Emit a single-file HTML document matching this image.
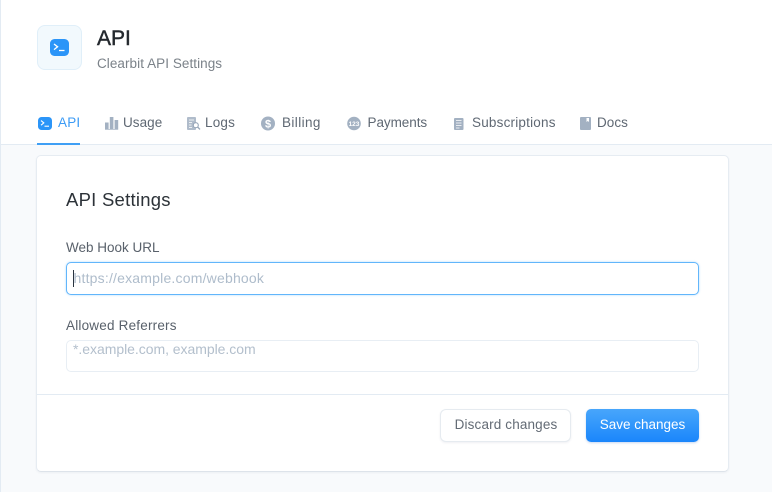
<!DOCTYPE html>
<html>
<head>
<meta charset="utf-8">
<style>
html,body{margin:0;padding:0}
body{width:772px;height:492px;position:relative;overflow:hidden;background:#f8fafc;font-family:"Liberation Sans",sans-serif}
.a{position:absolute;white-space:nowrap}
.tab{position:absolute;top:114px;line-height:18px;font-size:13.5px;letter-spacing:.05px;color:#5f6873;white-space:nowrap}
svg{position:absolute;display:block}
</style>
</head>
<body>
<div class="a" style="left:0;top:0;width:772px;height:144px;background:#fff"></div>
<div class="a" style="left:0;top:144px;width:772px;height:1px;background:#e3ebf3"></div>
<div class="a" style="left:0;top:0;width:1px;height:492px;background:#e3ebf3"></div>

<div class="a" style="left:37px;top:25px;width:43px;height:43px;border:1px solid #e0eff9;border-radius:8px;background:#f2f9fd"></div>
<svg style="left:50px;top:39px" width="19" height="17" viewBox="0 0 19 17"><rect width="19" height="17" rx="4.500" fill="#2b95f8"/><path d="M4 5l3.600 2.800L4 10.600" fill="none" stroke="#fff" stroke-width="1.300"/><path d="M9 11.500h5.500" stroke="#fff" stroke-width="1.300"/></svg>
<div class="a" style="left:97px;top:26px;font-size:21px;line-height:26px;color:#24292e;-webkit-text-stroke:.45px #24292e">API</div>
<div class="a" style="left:97px;top:55px;font-size:13.5px;line-height:17px;letter-spacing:.06px;color:#7b8289">Clearbit API Settings</div>

<svg style="left:38px;top:117px" width="14" height="13" viewBox="0 0 14 13"><rect width="14" height="13" rx="3.500" fill="#2b95f8"/><path d="M3 3.600l2.800 2.300L3 8.200" fill="none" stroke="#fff" stroke-width="1.100"/><path d="M6.500 9.200h4.500" stroke="#fff" stroke-width="1.100"/></svg>
<div class="tab" style="left:58px;color:#3c9bf5;letter-spacing:.2px">API</div>
<div class="a" style="left:37px;top:143px;width:43px;height:2px;background:#3f9ff5"></div>

<svg style="left:105px;top:117px" width="14" height="13" viewBox="0 0 14 13"><g fill="#a3b1c2"><rect x="0" y="5.500" width="3.600" height="6.500"/><rect x="4.800" y="0" width="3.600" height="12"/><rect x="9.600" y="3" width="3.600" height="9"/><rect x="0" y="12.300" width="13.200" height=".7"/></g></svg>
<div class="tab" style="left:123px">Usage</div>

<svg style="left:187px;top:117px" width="15" height="14" viewBox="0 0 15 14"><path d="M0 1a1 1 0 0 1 1-1h7a1 1 0 0 1 1 1v11a1 1 0 0 1-1 1H1a1 1 0 0 1-1-1z" fill="#b0bccb"/><path d="M2 3h5M2 5.500h3M2 8h2.500M2 10.500h3" stroke="#fff" stroke-width=".8"/><circle cx="8.800" cy="8.200" r="2.500" fill="#fff" stroke="#97a6b8" stroke-width="1.100"/><path d="M10.600 10l2.400 2.400" stroke="#97a6b8" stroke-width="1.300"/></svg>
<div class="tab" style="left:205px;letter-spacing:.2px">Logs</div>

<svg style="left:261px;top:116px" width="14" height="15" viewBox="0 0 14 15"><circle cx="7" cy="7.500" r="7" fill="#a3b1c2"/><text x="7" y="11.500" font-family="Liberation Sans,sans-serif" font-size="11" font-weight="bold" text-anchor="middle" fill="#fff">$</text></svg>
<div class="tab" style="left:282px;letter-spacing:.4px">Billing</div>

<svg style="left:347px;top:116px" width="14" height="15" viewBox="0 0 14 15"><circle cx="7" cy="7.500" r="6.800" fill="#a3b1c2"/><text x="7" y="10" font-family="Liberation Sans,sans-serif" font-size="6.500" font-weight="bold" text-anchor="middle" fill="#fff">123</text></svg>
<div class="tab" style="left:367.500px;letter-spacing:-.05px">Payments</div>

<svg style="left:454px;top:118px" width="10" height="12" viewBox="0 0 10 12"><rect width="9.500" height="12" rx="1" fill="#a3b1c2"/><path d="M2 2.500h5.500M2 5h5.500M2 7.500h5.500M2 10h3.500" stroke="#fff" stroke-width=".7"/></svg>
<div class="tab" style="left:472px;letter-spacing:.2px">Subscriptions</div>

<svg style="left:580px;top:117px" width="11" height="13" viewBox="0 0 11 13"><path d="M1 0h9a1 1 0 0 1 1 1v11a1 1 0 0 1-1 1H1a1 1 0 0 1-1-1V1a1 1 0 0 1 1-1z" fill="#a3b1c2"/><path d="M6.500 1h2.500v4L7.750 4 6.500 5z" fill="#fff"/></svg>
<div class="tab" style="left:597px">Docs</div>

<div class="a" style="left:36px;top:155px;width:691px;height:315px;background:#fff;border:1px solid #e6ecf2;border-bottom-color:#dde3ea;border-radius:5px;box-shadow:0 1px 2px rgba(50,70,100,.06)"></div>

<div class="a" style="left:66px;top:187.500px;font-size:18.500px;line-height:23px;letter-spacing:.25px;color:#2c3238">API Settings</div>

<div class="a" style="left:66px;top:239px;font-size:13.5px;line-height:17px;letter-spacing:0;color:#59616b">Web Hook URL</div>
<div class="a" style="left:66px;top:262px;width:631px;height:31px;border:1px solid #62b6fb;border-radius:5px;background:#fff;box-shadow:0 0 2px rgba(85,176,251,.45)"></div>
<div class="a" style="left:73px;top:270px;width:1px;height:17px;background:#2a3440"></div>
<div class="a" style="left:73.500px;top:270px;font-size:14px;line-height:17px;letter-spacing:.2px;color:#aebccb">https://example.com/webhook</div>

<div class="a" style="left:66px;top:317px;font-size:13.5px;line-height:17px;letter-spacing:.2px;color:#59616b">Allowed Referrers</div>
<div class="a" style="left:66px;top:340px;width:631px;height:30px;border:1px solid #e8eef4;border-radius:5px;background:#fff"></div>
<div class="a" style="left:73px;top:341px;font-size:14px;line-height:17px;letter-spacing:-.04px;color:#b3bfcc">*.example.com, example.com</div>

<div class="a" style="left:37px;top:394px;width:691px;height:1px;background:#e3ebf3"></div>

<div class="a" style="left:440px;top:409px;width:129px;height:31px;border:1px solid #e6ebf0;border-radius:6px;background:#fff;box-shadow:0 1px 2px rgba(50,70,100,.08);text-align:center;font-size:13.5px;line-height:30px;letter-spacing:.15px;color:#636b75;text-indent:1px">Discard changes</div>
<div class="a" style="left:586px;top:409px;width:113px;height:33px;border-radius:5px;background:linear-gradient(#48a6fb,#1a86fb);box-shadow:0 1px 2px rgba(30,100,200,.25);text-align:center;font-size:13.5px;line-height:31px;letter-spacing:0;color:#fff">Save changes</div>
</body>
</html>
